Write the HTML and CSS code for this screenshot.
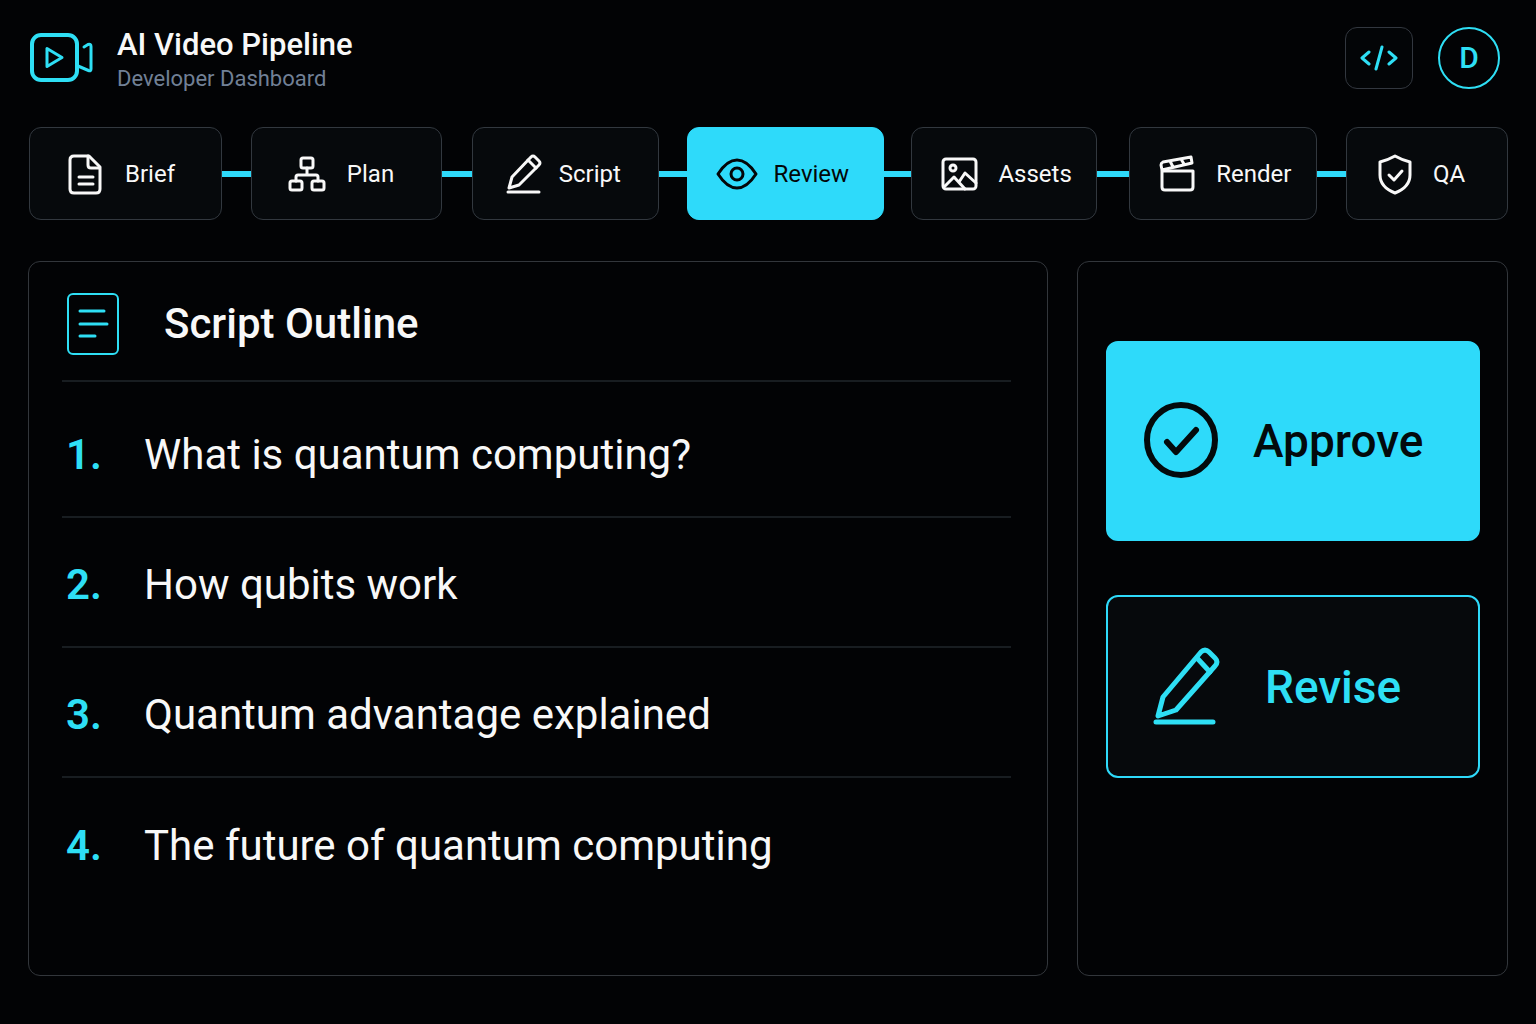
FILE: index.html
```html
<!DOCTYPE html>
<html lang="en">
<head>
    <meta charset="UTF-8">
    <meta name="viewport" content="width=device-width, initial-scale=1.0">
    <title>AI Video Pipeline</title>
    <link rel="stylesheet" href="styles.css">
</head>
<body>
    <header class="header">
        <svg class="logo" viewBox="0 0 64 50" aria-hidden="true">
            <rect x="2" y="2" width="45" height="45" rx="9" stroke-width="4"/>
            <path d="M17 15.500v18l15-9z" stroke-width="3"/>
            <path d="M54 14l4-2.500q3-1 3 2v22.500q0 2.500-2.500 1.500L48 33" stroke-width="3"/>
        </svg>
        <div class="brand">
            <h1>AI Video Pipeline</h1>
            <p>Developer Dashboard</p>
        </div>
        <div class="header-actions">
            <button class="code-button" type="button" aria-label="Code">
                <svg viewBox="0 0 38 26" aria-hidden="true">
                    <path d="M9 7l-7 6 7 6M22 2l-6 22M29 7l7 6-7 6"/>
                </svg>
            </button>
            <button class="avatar" type="button">D</button>
        </div>
    </header>

    <nav class="pipeline">
        <button class="step step-wide" type="button">
            <svg viewBox="0 0 42 42" aria-hidden="true">
                <path d="M10 3h15l11 11v22q0 4-4 4H10q-4 0-4-4V7q0-4 4-4z"/>
                <path d="M24 3v9q0 3 3 3h8M15 24h14M15 31h14"/>
            </svg>
            Brief
        </button>
        <span class="connector"></span>
        <button class="step step-wide" type="button">
            <svg viewBox="0 0 42 42" aria-hidden="true">
                <rect x="15" y="5" width="12" height="10" rx="2"/>
                <rect x="4" y="28" width="12" height="9" rx="2"/>
                <rect x="26" y="28" width="12" height="9" rx="2"/>
                <path d="M21 15v7M10 28v-4q0-2 2-2h18q2 0 2 2v4"/>
            </svg>
            Plan
        </button>
        <span class="connector"></span>
        <button class="step" type="button">
            <svg viewBox="0 0 42 42" aria-hidden="true">
                <path d="M8 35l3-11L30 4q2-2 4 0l4 4q2 2 0 4L18 32z"/>
                <path d="M27 7l8 8M7 39h31"/>
            </svg>
            Script
        </button>
        <span class="connector"></span>
        <button class="step step-active" type="button" aria-current="step">
            <svg viewBox="0 0 42 42" aria-hidden="true">
                <path d="M2 21Q11 7 21 7t19 14Q31 35 21 35T2 21z"/>
                <circle cx="21" cy="21" r="6"/>
            </svg>
            Review
        </button>
        <span class="connector"></span>
        <button class="step" type="button">
            <svg viewBox="0 0 42 42" aria-hidden="true">
                <rect x="3" y="6" width="33" height="30" rx="3"/>
                <circle cx="13" cy="15" r="3"/>
                <path d="M4 34l10-10 11 12M19 29l6-9 11 10"/>
            </svg>
            Assets
        </button>
        <span class="connector"></span>
        <button class="step" type="button">
            <svg viewBox="0 0 42 42" aria-hidden="true">
                <path d="M4 18h31v16q0 3-3 3H7q-3 0-3-3z"/>
                <path d="M4 17l-1-5q0-2 2-3l28-5 1 6zM12 8l3 6M23 6l3 5"/>
            </svg>
            Render
        </button>
        <span class="connector"></span>
        <button class="step" type="button">
            <svg viewBox="0 0 42 42" aria-hidden="true">
                <path d="M20 3q7 4 15 6v13q0 12-15 18Q5 34 5 22V9q8-2 15-6z"/>
                <path d="M14 22l5 5 8-9"/>
            </svg>
            QA
        </button>
    </nav>

    <main class="content">
        <section class="panel outline">
            <div class="outline-header">
                <svg viewBox="0 0 54 64" aria-hidden="true">
                    <rect x="2" y="2" width="50" height="60" rx="5" stroke-width="2"/>
                    <path d="M14 19h24M14 32h27M14 44h15" stroke-width="3"/>
                </svg>
                <h2>Script Outline</h2>
            </div>
            <ol class="outline-list">
                <li><span class="number">1.</span>What is quantum computing?</li>
                <li><span class="number">2.</span>How qubits work</li>
                <li><span class="number">3.</span>Quantum advantage explained</li>
                <li><span class="number">4.</span>The future of quantum computing</li>
            </ol>
        </section>

        <aside class="panel actions">
            <button class="action approve" type="button">
                <svg viewBox="0 0 76 80" aria-hidden="true">
                    <ellipse cx="38" cy="39" rx="34" ry="35"/>
                    <path d="M24 41l9 10 20-22"/>
                </svg>
                Approve
            </button>
            <button class="action revise" type="button">
                <svg viewBox="0 0 76 80" aria-hidden="true">
                    <path d="M7 69l5-19L50 5q4-4 8 0l6 6q4 4 0 8L25 63z"/>
                    <path d="M46 11l13 14M5 75h57"/>
                </svg>
                Revise
            </button>
        </aside>
    </main>
</body>
</html>
```

FILE: styles.css
```css
* {
    box-sizing: border-box;
}
body {
    display: flex;
    flex-direction: column;
    min-height: 100vh;
    margin: 0;
    padding: 26px 28px 48px;
    background-color: #020305;
    color: #f8f8f8;
    font-family: Roboto, Inter, sans-serif;
}
h1, h2, p, ol {
    margin: 0;
    padding: 0;
}
h1, h2 {
    font-weight: 500;
}
button {
    padding: 0;
    font: inherit;
    color: inherit;
    cursor: pointer;
}
svg {
    flex: none;
    fill: none;
    stroke: currentColor;
    stroke-width: 2;
    stroke-linecap: round;
    stroke-linejoin: round;
}

/* Header */
.header {
    display: flex;
    align-items: center;
    height: 63px;
    padding: 0 8px 0 2px;
}
.logo {
    width: 64px;
    height: 50px;
    color: #2edff5;
}
.brand {
    margin-left: 23px;
    padding-top: 4px;
}
.brand h1 {
    font-size: 31px;
    line-height: 38px;
}
.brand p {
    font-size: 22px;
    line-height: 30px;
    color: #718096;
}
.header-actions {
    display: flex;
    gap: 25px;
    margin-left: auto;
    color: #2edff5;
}
.code-button {
    display: flex;
    align-items: center;
    justify-content: center;
    width: 68px;
    height: 62px;
    background: #030507;
    border: 1px solid #32373f;
    border-radius: 12px;
}
.code-button svg {
    width: 38px;
    height: 26px;
    stroke-width: 3;
}
.avatar {
    width: 62px;
    height: 62px;
    background: none;
    border: 2px solid #2edff5;
    border-radius: 50%;
    font-size: 30px;
    font-weight: 500;
}

/* Pipeline steps */
.pipeline {
    display: grid;
    grid-template-columns: 193fr 29px 191fr 30px 187fr 28px 198fr 27px 186fr 32px 188fr 29px 162fr;
    align-items: center;
    margin: 38px 0 41px 1px;
}
.step {
    display: flex;
    align-items: center;
    gap: 16px;
    height: 93px;
    padding-left: 28px;
    background-color: #06090c;
    border: 1px solid #32383f;
    border-radius: 12px;
    font-size: 24px;
}
.step svg {
    width: 42px;
    height: 42px;
    stroke-width: 3;
}
.step-wide {
    gap: 19px;
    padding-left: 34px;
}
.step-active {
    background-color: #2edafa;
    border-color: #2edafa;
    color: #030608;
}
.connector {
    height: 6px;
    background-color: #2edafa;
}

/* Panels */
.content {
    flex: 1;
    display: grid;
    grid-template-columns: 1020fr 431fr;
    gap: 29px;
}
.panel {
    border: 1px solid #32363b;
    border-radius: 12px;
}
.outline {
    padding: 0 36px 0 33px;
}
.outline-header {
    display: flex;
    align-items: center;
    gap: 44px;
    height: 120px;
    padding: 5px 4px 0;
    border-bottom: 2px solid #181d21;
}
.outline-header svg {
    width: 54px;
    height: 64px;
    color: #2edff5;
}
.outline-header h2 {
    font-size: 42px;
}
.outline-list {
    list-style: none;
}
.outline-list li {
    display: flex;
    align-items: center;
    height: 130px;
    padding: 4px 4px 0;
    border-bottom: 2px solid #181d21;
    font-size: 42px;
}
.outline-list li:first-child {
    height: 136px;
    padding-top: 10px;
}
.outline-list li:last-child {
    border-bottom: none;
}
.number {
    width: 78px;
    color: #2edff5;
    font-weight: 600;
}

/* Review actions */
.actions {
    display: flex;
    flex-direction: column;
    gap: 54px;
    padding: 79px 27px 79px 28px;
}
.action {
    display: flex;
    align-items: center;
    gap: 34px;
    height: 200px;
    padding-left: 35px;
    border: 2px solid #2edafa;
    border-radius: 12px;
    font-size: 46px;
    font-weight: 500;
}
.action svg {
    width: 76px;
    height: 80px;
    stroke-width: 5;
}
.approve {
    background-color: #2edafa;
    color: #030a0c;
}
.approve svg {
    stroke-width: 6;
}
.revise {
    gap: 38px;
    height: 183px;
    padding-left: 43px;
    background-color: #06090c;
    color: #2edff5;
}
```
